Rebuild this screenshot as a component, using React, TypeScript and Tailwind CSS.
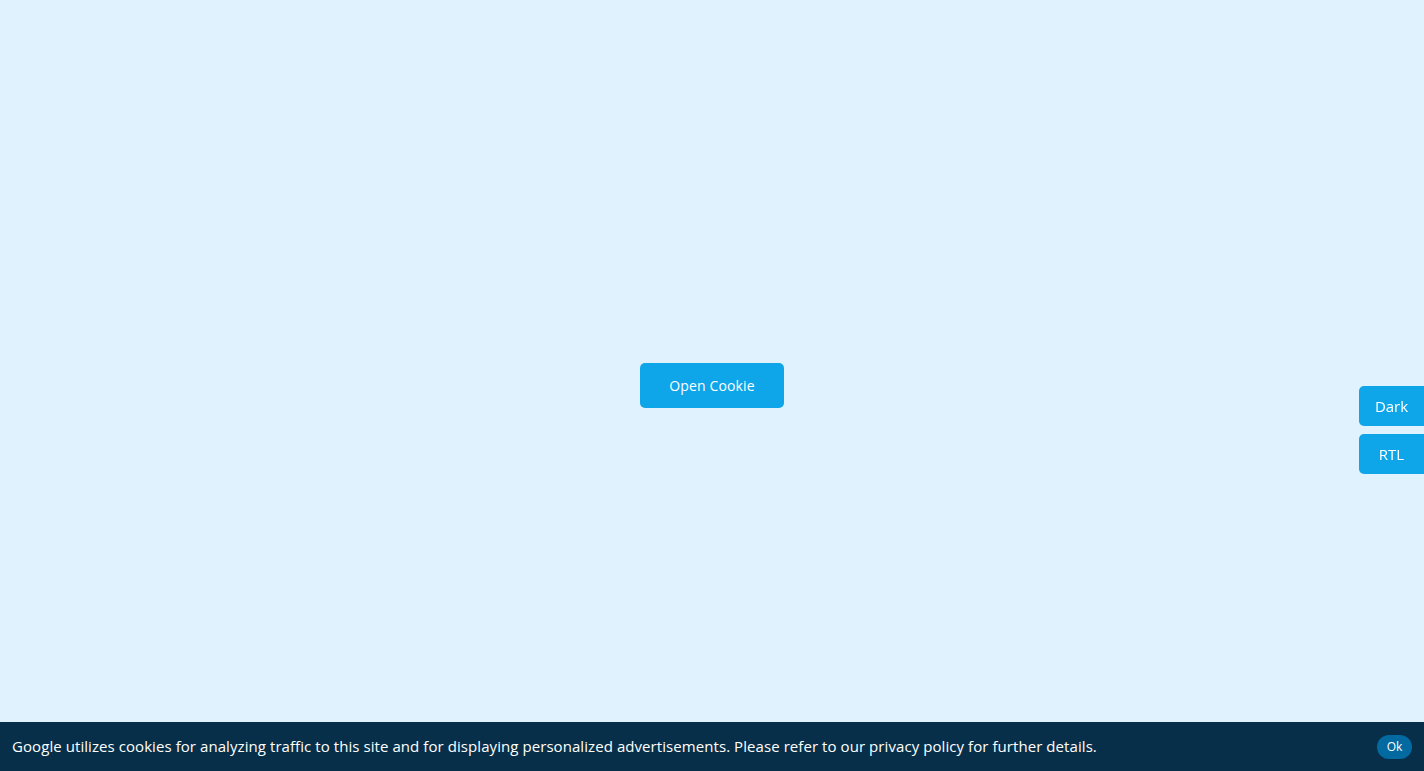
import React from "react";

const App: React.FC = () => {
    return (
        <div className="h-screen w-full bg-[#e0f2fe] flex items-center justify-center font-['Open_Sans',sans-serif]">
            <button className="w-[144px] h-[45px] rounded-[5px] bg-[#0ea5e9] text-white text-[14px] tracking-[0.15px]">
                Open Cookie
            </button>

            <div className="fixed right-0 top-[386px] flex flex-col gap-2">
                <button className="w-[65px] h-[40px] rounded-l-[5px] bg-[#0ea5e9] text-white text-[15px]">Dark</button>
                <button className="w-[65px] h-[40px] rounded-l-[5px] bg-[#0ea5e9] text-white text-[15px]">RTL</button>
            </div>

            <div className="fixed bottom-0 left-0 right-0 h-[49px] bg-[#082f49] flex items-center justify-between pl-3 pr-3">
                <p className="text-white text-[15px] tracking-[0.07px]">
                    Google utilizes cookies for analyzing traffic to this site and for displaying personalized advertisements. Please refer to our privacy policy for further details.
                </p>
                <button className="h-[24px] w-[35px] rounded-full bg-[#0369a1] text-white text-[12px]">Ok</button>
            </div>
        </div>
    );
};

export default App;
